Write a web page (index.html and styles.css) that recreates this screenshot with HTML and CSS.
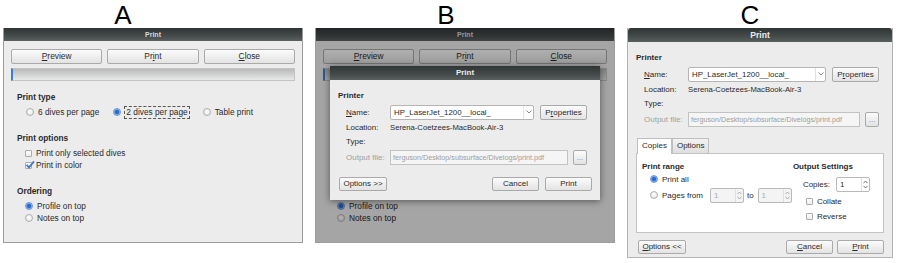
FILE: index.html
```html
<!DOCTYPE html>
<html lang="en">
<head>
    <meta charset="UTF-8">
    <title>Print dialogs</title>
    <link rel="stylesheet" href="styles.css">
</head>
<body>
<div class="sheet">

    <!-- A: subsurface print window -->
    <div class="col">
        <div class="caption caption-a">A</div>
        <div class="window win-main">
            <div class="titlebar tiny">Print</div>
            <div class="main-body">
                <div class="btn-row">
                    <button class="btn"><u>P</u>review</button>
                    <button class="btn">Pr<u>i</u>nt</button>
                    <button class="btn"><u>C</u>lose</button>
                </div>
                <div class="progress"></div>
                <div class="group">
                    <div class="group-title">Print type</div>
                    <div class="opt-row">
                        <span class="opt"><span class="radio"></span>6 dives per page</span>
                        <span class="opt"><span class="radio on"></span><span class="focus">2 dives per page</span></span>
                        <span class="opt"><span class="radio"></span>Table print</span>
                    </div>
                </div>
                <div class="group">
                    <div class="group-title">Print options</div>
                    <div class="opt-col">
                        <span class="opt"><span class="check"></span>Print only selected dives</span>
                        <span class="opt"><span class="check"><svg viewBox="0 0 10 10" width="10" height="10"><path d="M1.6 4.8 L4 7.4 L9 1.4" fill="none" stroke="#3b78d6" stroke-width="1.7"/></svg></span>Print in color</span>
                    </div>
                </div>
                <div class="group">
                    <div class="group-title">Ordering</div>
                    <div class="opt-col">
                        <span class="opt"><span class="radio on"></span>Profile on top</span>
                        <span class="opt"><span class="radio"></span>Notes on top</span>
                    </div>
                </div>
            </div>
        </div>
    </div>

    <!-- B: same window with the system dialog on top -->
    <div class="col">
        <div class="caption caption-b">B</div>
        <div class="window win-main">
            <div class="titlebar tiny">Print</div>
            <div class="main-body">
                <div class="btn-row">
                    <button class="btn"><u>P</u>review</button>
                    <button class="btn">Pr<u>i</u>nt</button>
                    <button class="btn"><u>C</u>lose</button>
                </div>
                <div class="progress"></div>
                <!-- these two groups sit under the dialog -->
                <div class="group covered">
                    <div class="group-title">Print type</div>
                    <div class="opt-row">
                        <span class="opt"><span class="radio"></span>6 dives per page</span>
                    </div>
                </div>
                <div class="group covered">
                    <div class="group-title">Print options</div>
                    <div class="opt-col">
                        <span class="opt"><span class="check"></span>Print only selected dives</span>
                        <span class="opt"><span class="check"></span>Print in color</span>
                    </div>
                </div>
                <div class="group">
                    <div class="group-title covered">Ordering</div>
                    <div class="opt-col">
                        <span class="opt"><span class="radio on"></span>Profile on top</span>
                        <span class="opt"><span class="radio"></span>Notes on top</span>
                    </div>
                </div>
            </div>
            <div class="shade"></div>

            <div class="dialog">
                <div class="titlebar">Print</div>
                <div class="printer">
                    <div class="sec-title">Printer</div>
                    <div class="field-row tall">
                        <span class="field-label"><u>N</u>ame:</span>
                        <span class="combo">HP_LaserJet_1200__local_<span class="combo-arrow"><svg width="6" height="4" viewBox="0 0 6 4"><path d="M0.5 0.5 L3 3 L5.5 0.5" fill="none" stroke="#8a8a8a"/></svg></span></span>
                        <button class="btn btn-props">P<u>r</u>operties</button>
                    </div>
                    <div class="field-row">
                        <span class="field-label">Location:</span>
                        <span class="value">Serena-Coetzees-MacBook-Air-3</span>
                    </div>
                    <div class="field-row">
                        <span class="field-label">Type:</span>
                    </div>
                    <div class="field-row tall out-row">
                        <span class="field-label muted">Output file:</span>
                        <span class="path">ferguson/Desktop/subsurface/Divelogs/print.pdf</span>
                        <button class="btn btn-dots">...</button>
                    </div>
                    <div class="dlg-foot foot-b">
                        <button class="btn btn-opts">Options &gt;&gt;</button>
                        <button class="btn btn-cancel">Cancel</button>
                        <button class="btn btn-print">Print</button>
                    </div>
                </div>
            </div>
        </div>
    </div>

    <!-- C: expanded system dialog -->
    <div class="col">
        <div class="caption caption-c">C</div>
        <div class="window win-c">
            <div class="titlebar">Print</div>
            <div class="printer">
                <div class="sec-title">Printer</div>
                <div class="field-row tall">
                    <span class="field-label"><u>N</u>ame:</span>
                    <span class="combo">HP_LaserJet_1200__local_<span class="combo-arrow"><svg width="6" height="4" viewBox="0 0 6 4"><path d="M0.5 0.5 L3 3 L5.5 0.5" fill="none" stroke="#8a8a8a"/></svg></span></span>
                    <button class="btn btn-props">P<u>r</u>operties</button>
                </div>
                <div class="field-row">
                    <span class="field-label">Location:</span>
                    <span class="value">Serena-Coetzees-MacBook-Air-3</span>
                </div>
                <div class="field-row">
                    <span class="field-label">Type:</span>
                </div>
                <div class="field-row tall out-row">
                    <span class="field-label muted">Output file:</span>
                    <span class="path">ferguson/Desktop/subsurface/Divelogs/print.pdf</span>
                    <button class="btn btn-dots">...</button>
                </div>

                <div class="tabs">
                    <span class="tab active">Copies</span>
                    <span class="tab">Options</span>
                </div>
                <div class="tab-panel">
                    <div class="range">
                        <div class="sec-title">Print range</div>
                        <div class="range-row"><span class="radio on"></span>Print all</div>
                        <div class="range-row pages">
                            <span class="radio"></span>Pages from
                            <span class="spin off pages-from"><span class="spin-val">1</span><span class="spin-arrows"><svg width="5" height="4" viewBox="0 0 5 4"><path d="M0.5 3.2 L2.5 1 L4.5 3.2" fill="none" stroke="#aaa"/></svg><svg width="5" height="4" viewBox="0 0 5 4"><path d="M0.5 0.8 L2.5 3 L4.5 0.8" fill="none" stroke="#aaa"/></svg></span></span>
                            <span class="to">to</span>
                            <span class="spin off"><span class="spin-val">1</span><span class="spin-arrows"><svg width="5" height="4" viewBox="0 0 5 4"><path d="M0.5 3.2 L2.5 1 L4.5 3.2" fill="none" stroke="#aaa"/></svg><svg width="5" height="4" viewBox="0 0 5 4"><path d="M0.5 0.8 L2.5 3 L4.5 0.8" fill="none" stroke="#aaa"/></svg></span></span>
                        </div>
                    </div>
                    <div class="output">
                        <div class="sec-title">Output Settings</div>
                        <div class="copies-row">
                            Copies:
                            <span class="spin"><span class="spin-val">1</span><span class="spin-arrows"><svg width="5" height="4" viewBox="0 0 5 4"><path d="M0.5 3.2 L2.5 1 L4.5 3.2" fill="none" stroke="#777"/></svg><svg width="5" height="4" viewBox="0 0 5 4"><path d="M0.5 0.8 L2.5 3 L4.5 0.8" fill="none" stroke="#777"/></svg></span></span>
                        </div>
                        <div class="out-opt"><span class="check"></span>Collate</div>
                        <div class="out-opt"><span class="check"></span>Reverse</div>
                    </div>
                </div>

                <div class="dlg-foot foot-c">
                    <button class="btn btn-opts"><u>O</u>ptions &lt;&lt;</button>
                    <button class="btn btn-cancel"><u>C</u>ancel</button>
                    <button class="btn btn-print"><u>P</u>rint</button>
                </div>
            </div>
        </div>
    </div>

</div>
</body>
</html>
```

FILE: styles.css
```css
* {
    margin: 0;
    padding: 0;
    box-sizing: border-box;
}

body {
    background: #fff;
    font-family: "Liberation Sans", Arial, sans-serif;
    font-size: 8px;
    color: #2a2a2a;
    width: 898px;
    height: 263px;
    overflow: hidden;
}

.sheet {
    display: flex;
    gap: 12px;
    padding-left: 3px;
}

.col {
    display: flex;
    flex-direction: column;
}

.caption {
    width: 40px;
    height: 28px;
    line-height: 30px;
    font-size: 26px;
    text-align: center;
    color: #000;
}

.caption-a { margin-left: 100px; }
.caption-b { margin-left: 111px; }
.caption-c { margin-left: 103px; }

/* windows */

.window {
    position: relative;
    background: #ececec;
    border: 1px solid #9c9c9c;
    border-top: none;
}

.win-main {
    width: 300px;
    height: 215px;
    font-size: 8.3px;
}

.win-c {
    width: 266px;
    height: 230px;
    border-color: #b4b4b4;
}

.titlebar {
    height: 14px;
    line-height: 14px;
    background: linear-gradient(#2f3535, #454b4b 60%, #5a5f5f);
    color: #ececec;
    font-size: 8px;
    font-weight: bold;
    text-align: center;
}

.win-c .titlebar {
    font-size: 8.6px;
    border-radius: 3px 3px 0 0;
}

.titlebar.tiny {
    height: 13px;
    line-height: 13px;
    font-size: 7px;
    color: #d8d8d8;
}

u {
    text-decoration: underline;
    text-underline-offset: 1px;
}

.btn {
    height: 15px;
    border: 1px solid #aaa;
    border-radius: 2px;
    background: linear-gradient(#fbfbfb, #e3e3e3);
    font-family: inherit;
    font-size: inherit;
    color: #2a2a2a;
    line-height: 13px;
    text-align: center;
    white-space: nowrap;
}

/* main (A/B) window */

.main-body {
    padding: 0 7px;
}

.btn-row {
    display: flex;
    gap: 5px;
    margin-top: 8px;
}

.btn-row .btn {
    flex: 1;
    font-size: 8.4px;
}

.progress {
    margin-top: 4px;
    height: 13px;
    border: 1px solid #c4c4c4;
    border-left: 2px solid #3d7ed8;
    background: linear-gradient(#b8baba, #d3d4d4 55%, #e9e9e9);
}

.group {
    margin-top: 14px;
    padding-left: 6px;
}

.progress + .group {
    margin-top: 10px;
}

.covered {
    visibility: hidden;
}

.group-title {
    height: 12px;
    line-height: 12px;
    font-weight: bold;
    margin-bottom: 3px;
}

.opt-row {
    display: flex;
    gap: 14px;
    padding-left: 9px;
    height: 12px;
}

.opt-col {
    display: flex;
    flex-direction: column;
    padding-left: 8px;
}

.opt {
    display: flex;
    align-items: center;
    height: 12px;
    white-space: nowrap;
}

.focus {
    outline: 1px dashed #555;
    outline-offset: 0;
    padding: 0 1px;
    line-height: 11px;
}

.radio {
    flex: none;
    width: 8px;
    height: 8px;
    border-radius: 50%;
    border: 1px solid #b0b0b0;
    background: radial-gradient(circle at 50% 40%, #fff, #dedede);
    margin-right: 4px;
}

.radio.on {
    border-color: #6b98d4;
    background: radial-gradient(circle, #2c6bcc 0 1.6px, #79a9ea 2.6px, #b7d2f3);
}

.check {
    position: relative;
    flex: none;
    width: 7px;
    height: 7px;
    border: 1px solid #ababab;
    border-radius: 1px;
    background: linear-gradient(#fff, #ececec);
    margin-right: 4px;
}

.check svg {
    position: absolute;
    left: -1px;
    top: -3px;
}

.shade {
    position: absolute;
    inset: 0;
    background: rgba(0, 0, 0, 0.3);
}

/* system print dialog */

.dialog {
    position: absolute;
    left: 14px;
    top: 38px;
    width: 270px;
    height: 134px;
    background: #ececec;
    box-shadow: 0 1px 7px rgba(0, 0, 0, 0.5);
    font-size: 8px;
}

.printer {
    padding: 0 8px;
}

.sec-title {
    height: 12px;
    line-height: 12px;
    font-weight: bold;
    white-space: nowrap;
}

.printer > .sec-title {
    margin-top: 10px;
}

.field-row {
    display: flex;
    align-items: center;
    height: 14px;
    padding: 0 5px 0 8px;
    white-space: nowrap;
}

.field-row.tall {
    height: 16px;
    margin-top: 2px;
}

.field-row.out-row {
    margin-top: 1px;
}

.field-label {
    flex: none;
    width: 44px;
}

.muted {
    color: #a0a0a0;
}

.value {
    font-size: 7.7px;
}

.combo {
    flex: 1;
    display: flex;
    align-items: center;
    height: 15px;
    padding-left: 3px;
    border: 1px solid #b5b5b5;
    border-radius: 2px;
    background: #fff;
    font-size: 7.9px;
}

.combo-arrow {
    display: flex;
    align-items: center;
    justify-content: center;
    margin-left: auto;
    width: 10px;
    height: 100%;
    border-left: 1px solid #e2e2e2;
}

.btn-props {
    width: 47px;
    margin-left: 6px;
}

.path {
    flex: 1;
    height: 15px;
    line-height: 13px;
    padding-left: 2px;
    border: 1px solid #c2c2c2;
    background: #f5f5f5;
    color: #9d9d9d;
    font-size: 7.2px;
    overflow: hidden;
}

.btn-dots {
    width: 14px;
    margin-left: 5px;
    color: #888;
}

.dlg-foot {
    display: flex;
    height: 14px;
}

.dlg-foot .btn {
    height: 14px;
    line-height: 12px;
}

.foot-b {
    margin-top: 12px;
    gap: 6px;
    padding-left: 1px;
}

.foot-c {
    margin-top: 7px;
    gap: 4px;
    padding-left: 2px;
}

.btn-opts { width: 48px; }
.btn-cancel { width: 47px; margin-left: auto; }
.btn-print { width: 47px; }

/* tabs (C) */

.tabs {
    display: flex;
    margin-top: 11px;
    padding-left: 1px;
}

.tab {
    height: 15px;
    line-height: 14px;
    padding: 0 4px;
    border: 1px solid #bfbfbf;
    border-bottom: none;
    background: linear-gradient(#f2f2f2, #dfdfdf);
}

.tab.active {
    position: relative;
    height: 16px;
    margin-bottom: -1px;
    background: #fff;
}

.tab-panel {
    display: flex;
    justify-content: space-between;
    height: 80px;
    padding: 7px 13px 0 5px;
    background: #fff;
    border: 1px solid #c3c3c3;
}

.range-row {
    display: flex;
    align-items: center;
    height: 12px;
    padding-left: 8px;
    white-space: nowrap;
}

.range-row.pages {
    height: 16px;
    margin-top: 2px;
}

.pages-from {
    margin-left: 7px;
}

.to {
    margin: 0 4px 0 3px;
}

.spin {
    display: flex;
    flex: none;
    width: 34px;
    height: 15px;
    border: 1px solid #b9b9b9;
    border-radius: 2px;
    background: #fff;
}

.spin.off {
    background: #f4f4f4;
    color: #aaa;
}

.spin-val {
    flex: 1;
    padding-left: 3px;
    line-height: 13px;
}

.spin-arrows {
    display: flex;
    flex-direction: column;
    justify-content: center;
    gap: 1px;
    width: 8px;
    border-left: 1px solid #e0e0e0;
    padding-left: 1px;
}

.copies-row {
    display: flex;
    align-items: center;
    gap: 6px;
    height: 16px;
    margin-top: 3px;
    padding-left: 10px;
    white-space: nowrap;
}

.out-opt {
    display: flex;
    align-items: center;
    height: 12px;
    margin-top: 3px;
    padding-left: 13px;
    white-space: nowrap;
}
```
